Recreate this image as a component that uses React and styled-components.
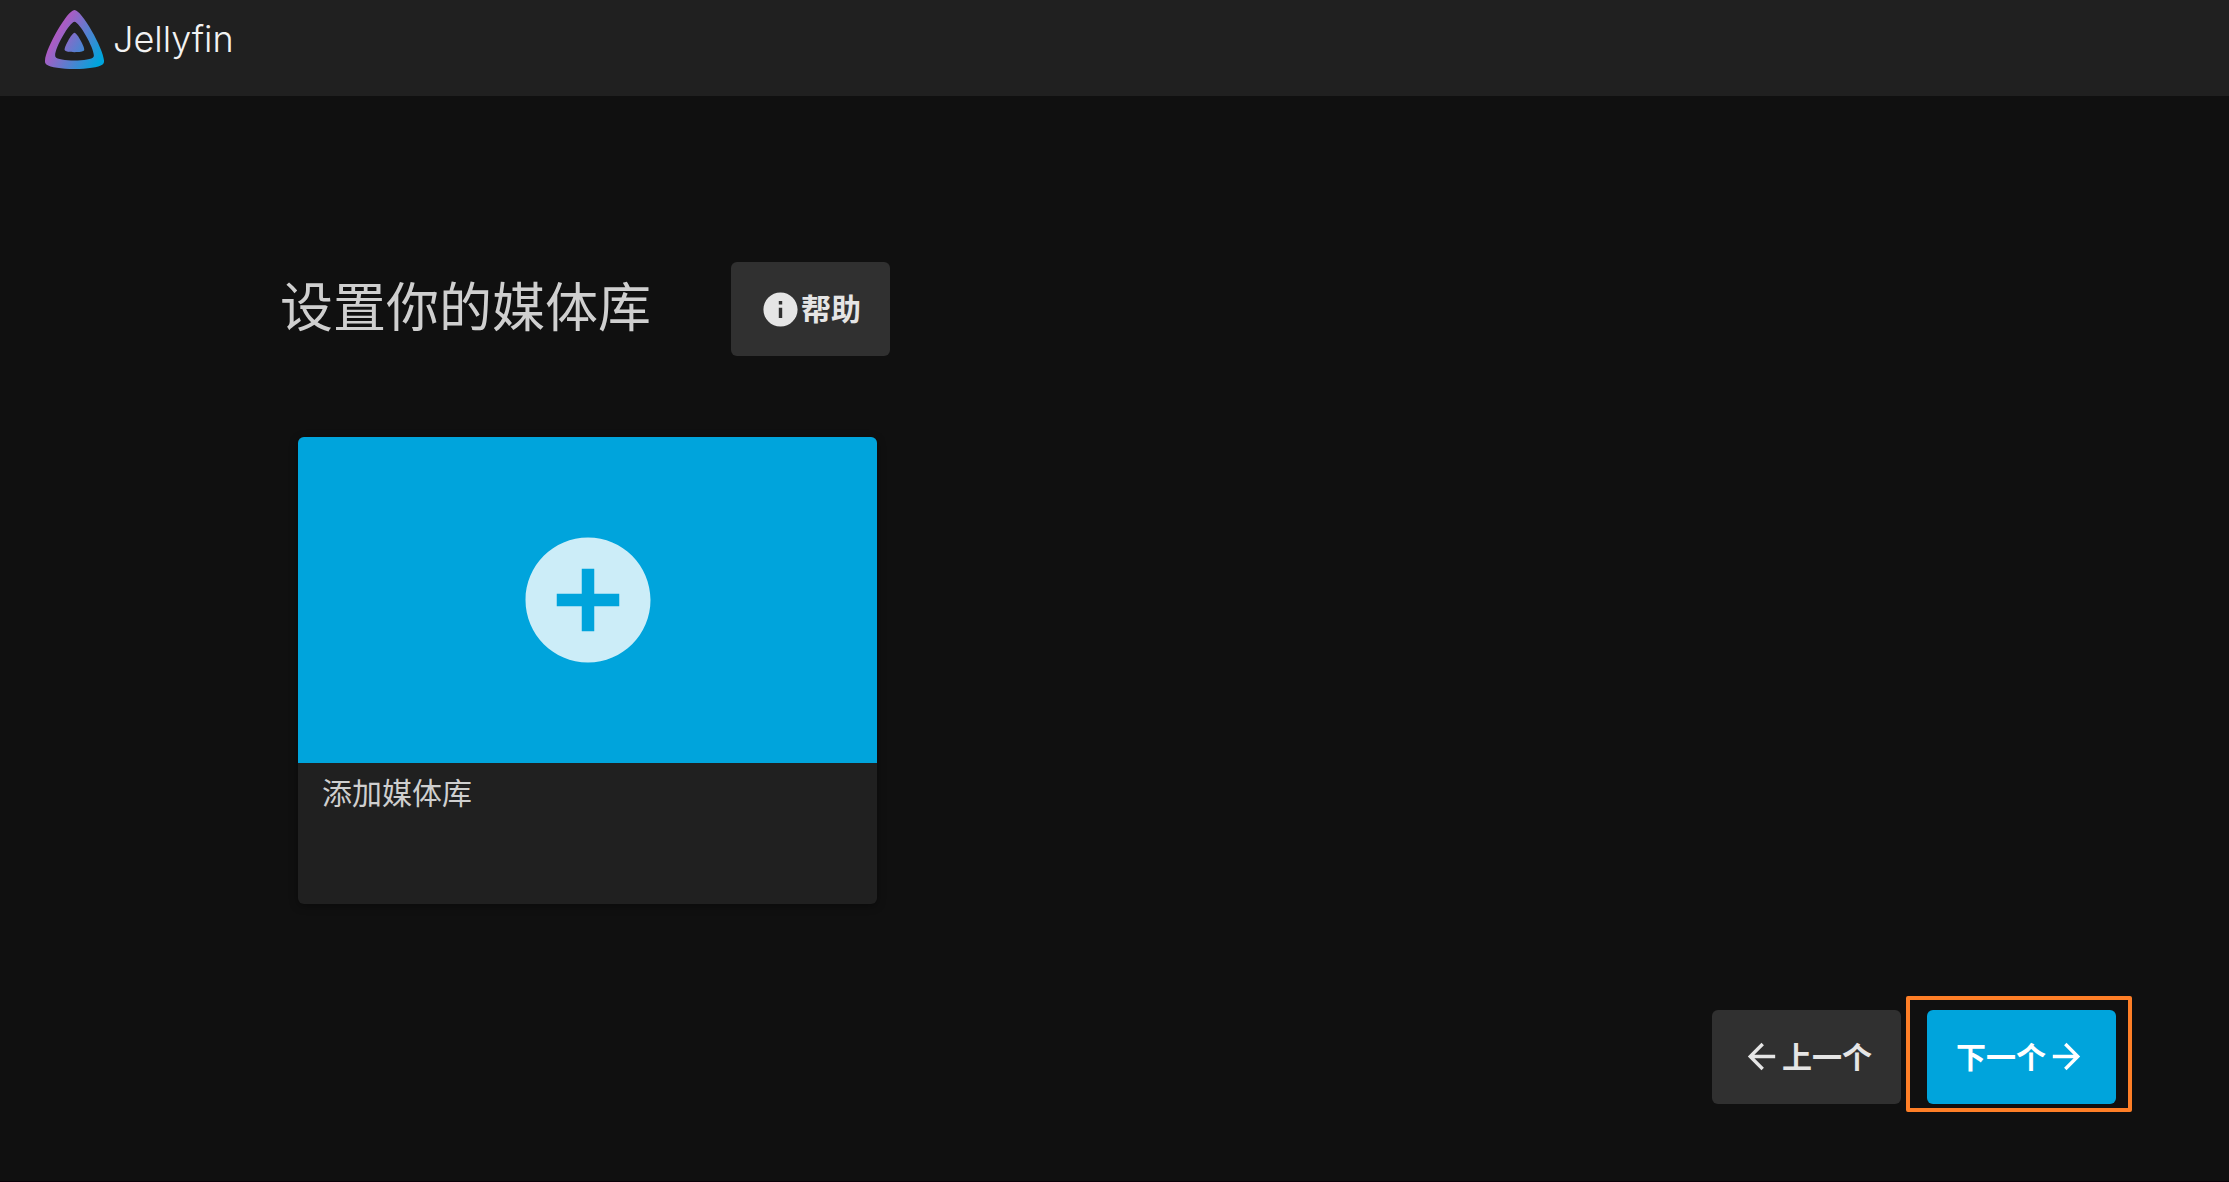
import React from 'react';
import styled, { createGlobalStyle } from 'styled-components';
import { MdAddCircle, MdArrowBack, MdArrowForward, MdInfo } from 'react-icons/md';

const GlobalStyle = createGlobalStyle`
  * {
    box-sizing: border-box;
  }

  body {
    margin: 0;
    background-color: #101010;
    color: #cfcfcf;
    font-family: 'Noto Sans', 'Noto Sans CJK SC', sans-serif;
    font-size: 30px;
  }
`;

const Page = styled.div`
  min-height: 100vh;
  border-bottom: 1px solid #0a0008;
`;

// Top bar
const Header = styled.header`
  display: flex;
  align-items: flex-start;
  height: 96px;
  padding: 10px 45px;
  background-color: #202020;
`;

const Brand = styled.a`
  display: flex;
  gap: 9px;
  color: #f2f2f2;
  text-decoration: none;
`;

const BrandIcon = styled.svg`
  width: 59px;
  height: 59px;
`;

const BrandName = styled.span`
  font-family: Inter, sans-serif;
  font-size: 36px;
  font-weight: 300;
  line-height: 58px;
`;

const Content = styled.main`
  padding: 166px 113px 76px 280px;
`;

const TitleRow = styled.div`
  display: flex;
  flex-wrap: wrap;
  align-items: center;
  gap: 80px;
  margin-bottom: 81px;
`;

const Title = styled.h1`
  margin: 0;
  padding-bottom: 4px;
  font-size: 53px;
  font-weight: 400;
  line-height: 80px;
`;

const Button = styled.button`
  display: inline-flex;
  align-items: center;
  height: 94px;
  padding: 0 29px;
  border: 0;
  border-radius: 6px;
  background-color: ${(props) => (props.$primary ? '#00a4dc' : '#303030')};
  color: ${(props) => (props.$primary ? '#fff' : '#e5e5e5')};
  font-family: inherit;
  font-size: 30px;
  font-weight: 700;
  line-height: 44px;
  cursor: pointer;

  svg {
    width: 41px;
    height: 41px;
  }
`;

// Library card
const Card = styled.button`
  display: block;
  width: 100%;
  max-width: 579px;
  margin: 0 18px;
  padding: 0;
  border: 0;
  border-radius: 6px;
  overflow: hidden;
  background-color: #202020;
  box-shadow: 0 2px 9px rgba(0, 0, 0, 0.37);
  color: inherit;
  font-family: inherit;
  text-align: left;
  cursor: pointer;
`;

const CardImage = styled.span`
  display: flex;
  align-items: center;
  justify-content: center;
  aspect-ratio: 16 / 9;
  background-color: #00a4dc;
  color: rgba(255, 255, 255, 0.8);

  svg {
    width: 150px;
    height: 150px;
  }
`;

const CardFooter = styled.span`
  display: block;
  min-height: 141px;
  padding: 8px 24px;
  font-size: 30px;
  line-height: 44px;
`;

const WizardNav = styled.nav`
  display: flex;
  justify-content: flex-end;
  gap: 26px;
  margin-top: 106px;
`;

// Outline drawn around the next step
const Highlight = styled.div`
  position: relative;

  &::after {
    content: '';
    position: absolute;
    inset: -14px -16px -8px -21px;
    border: 4px solid #ff7f27;
    border-radius: 2px;
    pointer-events: none;
  }
`;

const Logo = () => (
  <BrandIcon viewBox="24 23 464 465" aria-hidden="true">
    <defs>
      <linearGradient id="brand" gradientUnits="userSpaceOnUse" x1="126" y1="219" x2="458" y2="411">
        <stop offset="0" stopColor="#aa5cc3" />
        <stop offset="1" stopColor="#00a4dc" />
      </linearGradient>
    </defs>
    <path
      fill="url(#brand)"
      d="M256 201.6c-20.4 0-86.2 119.3-76.2 139.4s142.5 19.9 152.4 0-55.7-139.4-76.2-139.4z"
    />
    <path
      fill="url(#brand)"
      d="M256 23.3c-61.6 0-259.8 359.4-229.6 420.1s429.3 60 459.2 0S317.7 23.3 256 23.3zm150.5 367.5c-19.6 39.3-281.1 39.8-300.9 0s110.1-275.3 150.4-275.3 170.1 235.9 150.5 275.3z"
    />
  </BrandIcon>
);

const App = () => {
  return (
    <Page lang="zh-CN">
      <GlobalStyle />
      <Header>
        <Brand href="#">
          <Logo />
          <BrandName>Jellyfin</BrandName>
        </Brand>
      </Header>
      <Content>
        <TitleRow>
          <Title>设置你的媒体库</Title>
          <Button type="button">
            <MdInfo />
            <span>帮助</span>
          </Button>
        </TitleRow>
        <Card type="button">
          <CardImage>
            <MdAddCircle />
          </CardImage>
          <CardFooter>添加媒体库</CardFooter>
        </Card>
        <WizardNav>
          <Button type="button">
            <MdArrowBack />
            <span>上一个</span>
          </Button>
          <Highlight>
            <Button type="button" $primary>
              <span>下一个</span>
              <MdArrowForward />
            </Button>
          </Highlight>
        </WizardNav>
      </Content>
    </Page>
  );
};

export default App;
